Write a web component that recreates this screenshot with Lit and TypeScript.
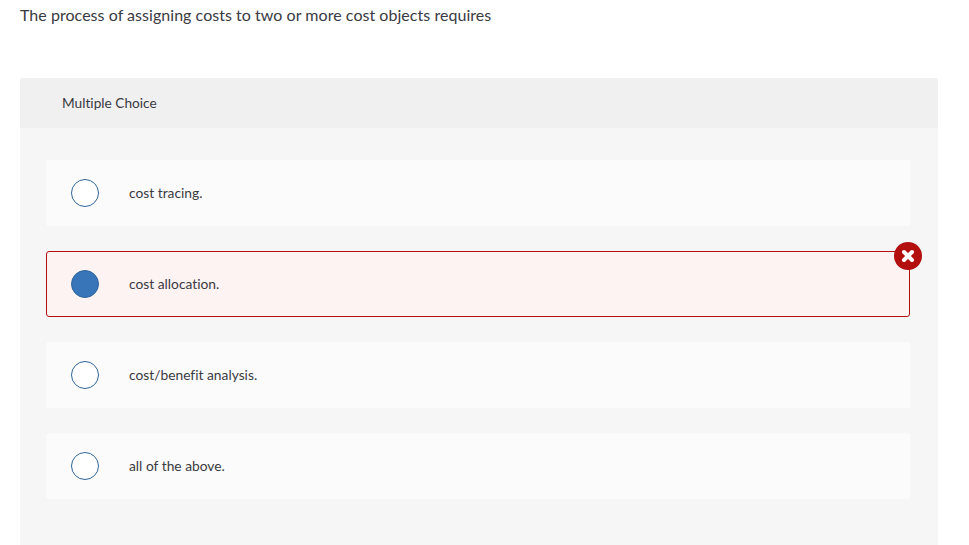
import { LitElement, html, css } from 'lit';
import { customElement } from 'lit/decorators.js';

const CHOICES = [
  { text: 'cost tracing.', picked: false },
  { text: 'cost allocation.', picked: true },
  { text: 'cost/benefit analysis.', picked: false },
  { text: 'all of the above.', picked: false },
];

@customElement('app-root')
export class AppRoot extends LitElement {
  static styles = css`
    :host {
      display: block;
      height: 545px;
      overflow: hidden;
      background: #fff;
      font-family: 'Lato', 'Liberation Sans', sans-serif;
      font-variant-ligatures: none;
      color: #3a3a42;
    }
    .question {
      margin: 0;
      padding: 6px 0 0 20px;
      height: 78px;
      box-sizing: border-box;
      font-size: 16px;
      letter-spacing: 0.04px;
      line-height: 18px;
    }
    .panel {
      margin: 0 31px 0 20px;
      height: 467px;
      background: #f6f6f6;
      border-radius: 3px 3px 0 0;
    }
    .kind {
      height: 50px;
      padding: 0 0 2px 42px;
      box-sizing: border-box;
      display: flex;
      align-items: center;
      background: #f0f0f0;
      border-radius: 3px 3px 0 0;
      font-size: 13.7px;
    }
    .choices {
      list-style: none;
      margin: 0;
      padding: 32px 28px 0 26px;
      display: flex;
      flex-direction: column;
      gap: 25px;
    }
    .choice {
      position: relative;
      box-sizing: border-box;
      height: 66px;
      padding-left: 24px;
      display: flex;
      align-items: center;
      gap: 30px;
      background: #fbfbfb;
      border: 1px solid transparent;
      border-radius: 3px;
      font-size: 13.8px;
    }
    .choice.wrong {
      background: #fdf3f2;
      border-color: #b30f0f;
    }
    .radio {
      box-sizing: border-box;
      width: 28px;
      height: 28px;
      border: 1.25px solid #2f659b;
      border-radius: 50%;
      background: #fff;
      flex: none;
    }
    .wrong .radio {
      background: #3874b8;
    }
    .label {
      padding-bottom: 2px;
    }
    .mark {
      position: absolute;
      top: -10px;
      right: -13px;
      width: 28px;
      height: 28px;
    }
  `;

  render() {
    return html`
      <p class="question">The process of assigning costs to two or more cost objects requires</p>
      <section class="panel">
        <div class="kind">Multiple Choice</div>
        <ul class="choices">
          ${CHOICES.map(
            (c) => html`
              <li class="choice ${c.picked ? 'wrong' : ''}">
                <span class="radio"></span>
                <span class="label">${c.text}</span>
                ${c.picked
                  ? html`<svg class="mark" viewBox="0 0 28 28">
                      <circle cx="14" cy="14" r="14" fill="#b30f0f"></circle>
                      <path d="M10 10l8 8M18 10l-8 8" stroke="#fff" stroke-width="4" stroke-linecap="round"></path>
                    </svg>`
                  : ''}
              </li>
            `
          )}
        </ul>
      </section>
    `;
  }
}
